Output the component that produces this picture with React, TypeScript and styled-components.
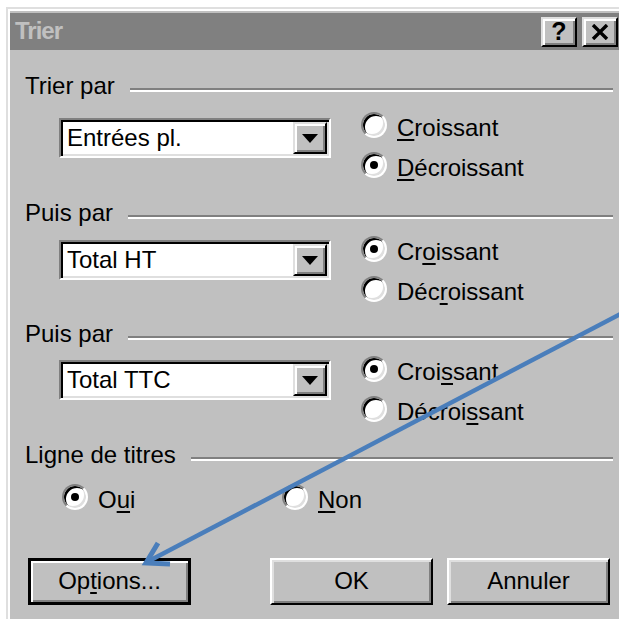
import React from 'react';
import styled, { createGlobalStyle } from 'styled-components';

const GlobalStyle = createGlobalStyle`
  html, body {
    margin: 0;
    padding: 0;
    background: #ffffff;
    overflow: hidden;
  }
  body {
    font-family: "Liberation Sans", Arial, sans-serif;
  }
`;

const Page = styled.div`
  position: relative;
  width: 619px;
  height: 619px;
  overflow: hidden;
`;

const Window = styled.div`
  margin: 7px 0 0 6px;
  width: 612px;
  height: 640px;
  border-top: 2px solid #dfdfdf;
  border-left: 2px solid #dfdfdf;
  padding: 4px 0 0 2px;
  background: #c0c0c0;
  box-shadow: inset 2px 2px 0 #ffffff;
  display: flex;
  flex-direction: column;
`;

const TitleBar = styled.div`
  height: 37px;
  background: #808080;
  display: flex;
  align-items: center;
  gap: 5px;
  padding: 0 4px 0 5px;
`;

const Title = styled.span`
  flex: 1;
  color: #c0c0c0;
  font-weight: bold;
  font-size: 24px;
  letter-spacing: -1px;
  margin-top: -2px;
`;

const raised = `
  background: #c0c0c0;
  border: 2px solid;
  border-color: #dfdfdf #000000 #000000 #dfdfdf;
  box-shadow: inset 2px 2px 0 #ffffff, inset -2px -2px 0 #808080;
`;

const CaptionButton = styled.div`
  ${raised}
  box-sizing: border-box;
  width: 36px;
  height: 30px;
  display: flex;
  align-items: center;
  justify-content: center;
  font-weight: bold;
  font-size: 25px;
  color: #000;
`;

const Content = styled.div`
  padding: 22px 9px 0 15px;
  display: flex;
  flex-direction: column;
  color: #000;
  font-size: 24px;
`;

const Group = styled.section<{ $top: number }>`
  margin-top: ${p => p.$top}px;
`;

const Legend = styled.div`
  display: flex;
  align-items: center;
  height: 28px;
  line-height: 28px;
`;

const Rule = styled.div`
  flex: 1;
  height: 2px;
  background: #808080;
  border-bottom: 2px solid #ffffff;
  margin: 8px 0 0 15px;
`;

const GroupBody = styled.div<{ $gap: number }>`
  display: flex;
  align-items: flex-start;
  margin-top: ${p => p.$gap}px;
  padding-left: 34px;
`;

const Combo = styled.div<{ $offset: number }>`
  box-sizing: border-box;
  width: 272px;
  height: 40px;
  margin-top: ${p => p.$offset}px;
  background: #ffffff;
  border: 2px solid;
  border-color: #808080 #ffffff #ffffff #808080;
  box-shadow: inset 2px 2px 0 #000000, inset -2px -2px 0 #dfdfdf;
  display: flex;
  align-items: stretch;
  padding: 2px 2px 2px 6px;
`;

const ComboText = styled.span`
  flex: 1;
  display: flex;
  align-items: center;
  line-height: 28px;
`;

const DropButton = styled.div`
  ${raised}
  box-sizing: border-box;
  width: 34px;
  display: flex;
  align-items: center;
  justify-content: center;
`;

const RadioColumn = styled.div`
  display: flex;
  flex-direction: column;
  margin-left: 30px;
`;

const RadioRow = styled.div`
  display: flex;
  margin-top: 11px;
  padding-left: 37px;
`;

const Option = styled.label<{ $width?: number }>`
  display: flex;
  align-items: center;
  gap: 10px;
  height: 40px;
  line-height: 28px;
  width: ${p => (p.$width ? `${p.$width}px` : 'auto')};
`;

const RadioDot = styled.span<{ $checked?: boolean }>`
  box-sizing: border-box;
  width: 26px;
  height: 26px;
  margin-bottom: 6px;
  border-radius: 50%;
  background: #ffffff;
  border: 2px solid;
  border-color: #808080 #ffffff #ffffff #808080;
  box-shadow: inset 2px 2px 0 #000000, inset -2px -2px 0 #dfdfdf;
  display: flex;
  align-items: center;
  justify-content: center;

  &::after {
    content: '';
    width: 8px;
    height: 8px;
    border-radius: 50%;
    background: #000;
    display: ${p => (p.$checked ? 'block' : 'none')};
  }
`;

const Key = styled.u`
  text-decoration-thickness: 2px;
  text-underline-offset: 3px;
`;

const Actions = styled.div`
  display: flex;
  margin-top: 38px;
  padding-left: 3px;
`;

const Button = styled.div<{ $default?: boolean; $gap?: number }>`
  box-sizing: border-box;
  width: 163px;
  height: 47px;
  margin-left: ${p => p.$gap ?? 0}px;
  display: flex;
  align-items: center;
  justify-content: center;
  background: #c0c0c0;
  border: ${p => (p.$default ? '3px solid #000000' : '2px solid')};
  border-color: ${p => (p.$default ? '#000000' : '#ffffff #000000 #000000 #ffffff')};
  box-shadow: ${p =>
    p.$default
      ? 'inset 2px 2px 0 #ffffff, inset -2px -2px 0 #808080'
      : 'inset 2px 2px 0 #dfdfdf, inset -2px -2px 0 #808080'};
  padding-bottom: 2px;
`;

const Overlay = styled.svg`
  position: absolute;
  top: 0;
  left: 0;
  pointer-events: none;
`;

const Arrow = () => (
  <svg width="16" height="9" viewBox="0 0 16 9">
    <polygon points="0,0 16,0 8,9" fill="#000" />
  </svg>
);

const CloseGlyph = () => (
  <svg width="18" height="16" viewBox="0 0 18 16">
    <path d="M2 1 L16 15 M16 1 L2 15" stroke="#000" strokeWidth="3.4" />
  </svg>
);

type Choice = { text: React.ReactNode; checked?: boolean };

type SortGroup = {
  label: string;
  value: string;
  top: number;
  gap: number;
  offset: number;
  choices: Choice[];
};

const groups: SortGroup[] = [
  {
    label: 'Trier par',
    value: 'Entrées pl.',
    top: 0,
    gap: 8,
    offset: 10,
    choices: [
      { text: <><Key>C</Key>roissant</> },
      { text: <><Key>D</Key>écroissant</>, checked: true },
    ],
  },
  {
    label: 'Puis par',
    value: 'Total HT',
    top: 11,
    gap: 5,
    offset: 8,
    choices: [
      { text: <>Cr<Key>o</Key>issant</>, checked: true },
      { text: <>Déc<Key>r</Key>oissant</> },
    ],
  },
  {
    label: 'Puis par',
    value: 'Total TTC',
    top: 8,
    gap: 4,
    offset: 8,
    choices: [
      { text: <>Croi<Key>s</Key>sant</>, checked: true },
      { text: <>Décroi<Key>s</Key>sant</> },
    ],
  },
];

const App: React.FC = () => (
  <Page>
    <GlobalStyle />
    <Window>
      <TitleBar>
        <Title>Trier</Title>
        <CaptionButton>?</CaptionButton>
        <CaptionButton>
          <CloseGlyph />
        </CaptionButton>
      </TitleBar>

      <Content>
        {groups.map((g, i) => (
          <Group key={i} $top={g.top}>
            <Legend>
              {g.label}
              <Rule />
            </Legend>
            <GroupBody $gap={g.gap}>
              <Combo $offset={g.offset}>
                <ComboText>{g.value}</ComboText>
                <DropButton>
                  <Arrow />
                </DropButton>
              </Combo>
              <RadioColumn>
                {g.choices.map((c, j) => (
                  <Option key={j}>
                    <RadioDot $checked={c.checked} />
                    <span>{c.text}</span>
                  </Option>
                ))}
              </RadioColumn>
            </GroupBody>
          </Group>
        ))}

        <Group $top={9}>
          <Legend>
            Ligne de titres
            <Rule />
          </Legend>
          <RadioRow>
            <Option $width={220}>
              <RadioDot $checked />
              <span>O<Key>u</Key>i</span>
            </Option>
            <Option>
              <RadioDot />
              <span><Key>N</Key>on</span>
            </Option>
          </RadioRow>
        </Group>

        <Actions>
          <Button $default>
            <span>Op<Key>t</Key>ions...</span>
          </Button>
          <Button $gap={79}>OK</Button>
          <Button $gap={14}>Annuler</Button>
        </Actions>
      </Content>
    </Window>

    <Overlay width="619" height="619" viewBox="0 0 619 619">
      <line x1="626" y1="311" x2="147" y2="562" stroke="#4a7ebb" strokeWidth="4.5" />
      <polyline
        points="158,543 146,563 170,564"
        fill="none"
        stroke="#4a7ebb"
        strokeWidth="5"
        strokeLinejoin="miter"
      />
    </Overlay>
  </Page>
);

export default App;
